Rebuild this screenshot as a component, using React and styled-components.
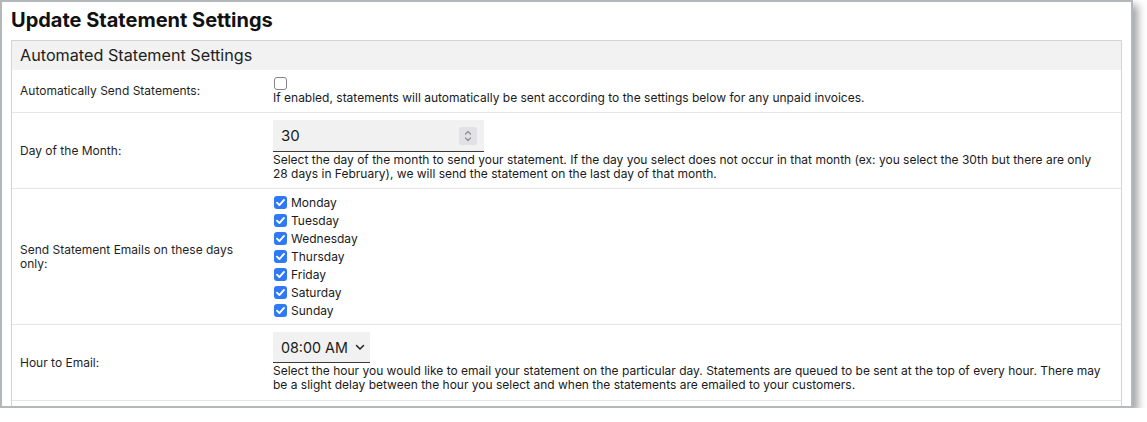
import React from "react";
import styled, { createGlobalStyle } from "styled-components";

const GlobalStyle = createGlobalStyle`
  html, body { margin: 0; padding: 0; background: #ffffff; }
  body { font-family: Inter, "Noto Sans", sans-serif; color: #1f1f1f; }
  * { box-sizing: border-box; }
`;

const Window = styled.div`
  width: 1133px;
  height: 408px;
  border: 2px solid #b3b8bd;
  background: #ffffff;
  box-shadow: 5px 5px 8px rgba(0, 0, 0, 0.36);
  overflow: hidden;
  padding: 0 9px;
`;

const Title = styled.h1`
  margin: 0;
  padding-top: 6px;
  height: 38px;
  font-size: 20px;
  line-height: 24px;
  font-weight: 700;
  color: #111;
`;

const Panel = styled.div`
  border: 1px solid #d4d4d4;
  min-height: 420px;
`;

const PanelHeader = styled.div`
  height: 29px;
  background: #f2f2f2;
  padding: 0 8px;
  font-size: 16.2px;
  line-height: 29px;
  color: #222;
`;

const Row = styled.div`
  display: grid;
  grid-template-columns: 261px 1fr;
  border-bottom: 1px solid #e6e6e6;
`;

const Label = styled.div`
  align-self: center;
  padding: 0 8px;
  font-size: 12px;
  line-height: 14px;
  color: #1f1f1f;
  padding-right: ${(p) => (p.$wrap ? "30px" : "8px")};
`;

const Content = styled.div`
  padding: ${(p) => p.$pad || "7px 15px 7px 0"};
  display: flex;
  flex-direction: column;
  align-items: flex-start;
`;

const Help = styled.div`
  font-size: 12px;
  line-height: 14px;
  color: #1a1a1a;
`;

const Box = styled.span`
  width: 13px;
  height: 13px;
  border-radius: 3px;
  display: inline-flex;
  align-items: center;
  justify-content: center;
  flex: none;
  background: ${(p) => (p.$checked ? "#2f78f6" : "#ffffff")};
  border: ${(p) => (p.$checked ? "none" : "1.5px solid #858589")};
  margin-left: 1px;
`;

const SingleCheck = styled.div`
  height: 13px;
  margin-bottom: 1px;
  display: flex;
`;

const DayList = styled.div`
  display: flex;
  flex-direction: column;
`;

const DayItem = styled.label`
  height: 18px;
  display: flex;
  align-items: center;
  gap: 4px;
  font-size: 12px;
  color: #1a1a1a;
`;

const NumberField = styled.div`
  width: 211px;
  height: 32px;
  background: #f1f1f1;
  border-bottom: 1px solid #3a3a3a;
  display: flex;
  align-items: center;
  padding: 0 7px 0 8px;
  margin-bottom: 1px;
`;

const NumberText = styled.span`
  flex: 1;
  font-size: 15px;
  color: #1a1a1a;
`;

const Spinner = styled.span`
  width: 18px;
  height: 18px;
  border-radius: 3px;
  background: #e1e1e6;
  display: flex;
  align-items: center;
  justify-content: center;
`;

const SelectField = styled.div`
  width: 97px;
  height: 31px;
  background: #f1f1f1;
  border-bottom: 1px solid #3a3a3a;
  display: flex;
  align-items: center;
  justify-content: space-between;
  padding: 0 5px 0 8px;
  margin-bottom: 1px;
  font-size: 14.3px;
  color: #1a1a1a;
`;

const Check = () => (
  <svg width="11" height="11" viewBox="0 0 11 11">
    <path d="M2 5.7 L4.4 8.1 L9 2.9" fill="none" stroke="#fff" strokeWidth="1.9" strokeLinecap="round" strokeLinejoin="round" />
  </svg>
);

const days = ["Monday", "Tuesday", "Wednesday", "Thursday", "Friday", "Saturday", "Sunday"];

export default function App() {
  return (
    <>
      <GlobalStyle />
      <Window>
        <Title>Update Statement Settings</Title>
        <Panel>
          <PanelHeader>Automated Statement Settings</PanelHeader>
          <Row>
            <Label>Automatically Send Statements:</Label>
            <Content>
              <SingleCheck>
                <Box />
              </SingleCheck>
              <Help>
                If enabled, statements will automatically be sent according to the settings below for any unpaid invoices.
              </Help>
            </Content>
          </Row>
          <Row>
            <Label>Day of the Month:</Label>
            <Content>
              <NumberField>
                <NumberText>30</NumberText>
                <Spinner>
                  <svg width="10" height="14" viewBox="0 0 10 14">
                    <path d="M2.5 5 L5 2.5 L7.5 5" fill="none" stroke="#8d8d92" strokeWidth="1.2" strokeLinecap="round" strokeLinejoin="round" />
                    <path d="M2.5 9 L5 11.5 L7.5 9" fill="none" stroke="#8d8d92" strokeWidth="1.2" strokeLinecap="round" strokeLinejoin="round" />
                  </svg>
                </Spinner>
              </NumberField>
              <Help>
                Select the day of the month to send your statement. If the day you select does not occur in that month (ex: you select the 30th but there are only
                28 days in February), we will send the statement on the last day of that month.
              </Help>
            </Content>
          </Row>
          <Row>
            <Label $wrap>Send Statement Emails on these days only:</Label>
            <Content $pad="4px 15px 5px 0">
              <DayList>
                {days.map((d) => (
                  <DayItem key={d}>
                    <Box $checked>
                      <Check />
                    </Box>
                    {d}
                  </DayItem>
                ))}
              </DayList>
            </Content>
          </Row>
          <Row>
            <Label>Hour to Email:</Label>
            <Content $pad="7px 15px 8px 0">
              <SelectField>
                <span>08:00 AM</span>
                <svg width="10" height="8" viewBox="0 0 10 8">
                  <path d="M1.5 2.5 L5 6 L8.5 2.5" fill="none" stroke="#222" strokeWidth="1.5" strokeLinecap="round" strokeLinejoin="round" />
                </svg>
              </SelectField>
              <Help>
                Select the hour you would like to email your statement on the particular day. Statements are queued to be sent at the top of every hour. There may
                be a slight delay between the hour you select and when the statements are emailed to your customers.
              </Help>
            </Content>
          </Row>
        </Panel>
      </Window>
    </>
  );
}
